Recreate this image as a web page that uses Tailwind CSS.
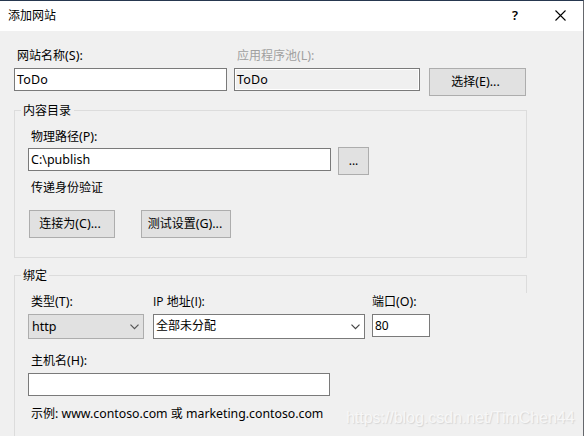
<!DOCTYPE html>
<html lang="zh-CN">
<head>
<meta charset="utf-8">
<title>添加网站</title>
<script src="https://cdn.jsdelivr.net/npm/@tailwindcss/browser@4"></script>
</head>
<body class="w-[584px] h-[436px] overflow-hidden bg-[#f0f0f0] text-black text-[12px] leading-4 font-['Noto_Sans','Noto_Sans_CJK_SC',sans-serif]">
<div class="relative w-full h-full flex flex-col overflow-hidden border-t border-t-[#26374f] border-r border-r-[#65676c] whitespace-nowrap">
  <header class="h-[30px] shrink-0 bg-white flex items-center pl-2 pr-[17px]">
    <h1 class="grow font-['Noto_Sans_CJK_SC',sans-serif] relative -top-px">添加网站</h1>
    <span class="text-[13px] font-semibold w-2 text-center mr-[36px] relative -top-px">?</span>
    <svg class="w-[11px] h-[11px] relative -top-px" viewBox="0 0 11 11" fill="none" stroke="#000" stroke-width="1.1"><path d="M.5.5l10 10M10.5.5l-10 10"/></svg>
  </header>

  <main class="pl-[14px] flex flex-col">
    <section class="flex pt-[17px] h-[79px]">
      <label class="w-[213px] mr-[7px] flex flex-col">
        <span class="pl-[3px] h-5">网站名称<span class="text-[12.5px]">(S):</span></span>
        <span class="h-[23px] border border-[#7a7a7a] bg-white pl-0.5 leading-[21px] text-[12.5px] tracking-[.2px]">ToDo</span>
      </label>
      <label class="w-[186px] mr-[9px] flex flex-col">
        <span class="pl-[3px] h-5 text-[#a0a0a0]">应用程序池<span class="text-[12.5px]">(L):</span></span>
        <span class="h-[23px] border border-[#7a7a7a] bg-[#f0f0f0] shadow-[inset_0_0_0_1px_#fff] pl-0.5 leading-[21px] text-[12.5px] tracking-[.2px]">ToDo</span>
      </label>
      <button class="mt-5 w-[97px] h-7 border border-[#adadad] bg-[#e1e1e1] pr-1">选择<span class="text-[12.5px]">(E)...</span></button>
    </section>

    <section class="relative w-[513px] h-[148px] border border-[#dcdcdc] pl-[13px] pt-[18px]">
      <h2 class="absolute left-[6px] -top-2 px-0.5 pr-[3px] bg-[#f0f0f0] leading-4">内容目录</h2>
      <div class="pl-[3px] h-[18px]">物理路径<span class="text-[12.5px]">(P):</span></div>
      <div class="flex items-start">
        <div class="mt-px w-[303px] h-[23px] border border-[#7a7a7a] bg-white pl-0.5 leading-[21px] text-[12.5px]">C:\publish</div>
        <button class="ml-[7px] w-[31px] h-7 border border-[#adadad] bg-[#e1e1e1]">...</button>
      </div>
      <div class="pl-[3px] mt-[5px]">传递身份验证</div>
      <div class="flex pl-px mt-[14px]">
        <button class="w-[86px] h-7 border border-[#adadad] bg-[#e1e1e1] pr-1">连接为<span class="text-[12.5px]">(C)...</span></button>
        <button class="ml-[26px] w-[90px] h-7 border border-[#adadad] bg-[#e1e1e1] pr-0.5">测试设置<span class="text-[12.5px]">(G)...</span></button>
      </div>
    </section>

    <section class="relative mt-[17px] w-[513px] h-[170px] border-t border-l border-[#dcdcdc] pl-[13px] pt-[18px]">
      <h2 class="absolute left-[6px] -top-2 px-0.5 bg-[#f0f0f0]">绑定</h2>
      <i class="absolute right-0 top-0 w-px h-[17px] bg-[#dcdcdc]"></i>
      <div class="flex">
        <div class="w-[116px]">
          <div class="pl-[3px] h-5">类型<span class="text-[12.5px]">(T):</span></div>
          <div class="h-[25px] border border-[#adadad] bg-[#e1e1e1] pl-[3px] pr-1 flex items-center justify-between text-[12.5px]"><span>http</span>
            <svg class="w-[9px] h-[6px]" viewBox="0 0 9 6" fill="none" stroke="#555" stroke-width="1.2"><path d="M.5.7l4 4 4-4"/></svg></div>
        </div>
        <div class="ml-[9px] w-[212px]">
          <div class="h-5 font-['Open_Sans','Noto_Sans_CJK_SC',sans-serif]">IP 地址<span class="text-[12.5px]">(I):</span></div>
          <div class="h-[25px] border border-[#7a7a7a] bg-white pl-0.5 pr-1 flex items-center justify-between"><span class="relative -top-px">全部未分配</span>
            <svg class="w-[9px] h-[6px]" viewBox="0 0 9 6" fill="none" stroke="#444" stroke-width="1.2"><path d="M.5.7l4 4 4-4"/></svg></div>
        </div>
        <div class="ml-[7px] w-[58px]">
          <div class="h-5">端口<span class="text-[12.5px]">(O):</span></div>
          <div class="h-[23px] border border-[#7a7a7a] bg-white pl-0.5 leading-[21px] text-[12px]">80</div>
        </div>
      </div>
      <div class="pl-[3px] mt-[14px] h-5">主机名<span class="text-[12.5px]">(H):</span></div>
      <div class="w-[302px] h-[23px] border border-[#7a7a7a] bg-white"></div>
      <div class="pl-[3px] mt-[10px]">示例<span class="text-[12.3px]">: www.contoso.com </span>或<span class="text-[12.3px]"> marketing.contoso.com</span></div>
    </section>
  </main>
  <div class="absolute left-[346px] top-[407px] text-[16px] leading-5 tracking-[-.04px] font-['Liberation_Sans',sans-serif] text-[#f7f7f7] [text-shadow:1px_1px_1px_#d6d6d6]">https://blog.csdn.net/TimChen44</div>
</div>
</body>
</html>
